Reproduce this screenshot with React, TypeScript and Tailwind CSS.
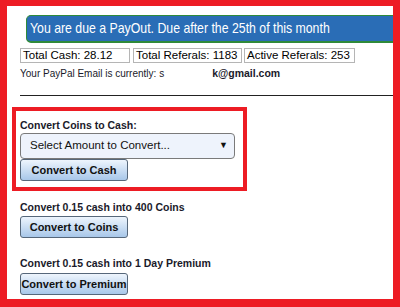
import React from "react";

const btn =
  "block w-[108px] h-[22px] rounded-[3px] border border-[#56677a] bg-gradient-to-b from-[#eef5fd] to-[#a8c7e9] text-[11px] font-bold text-[#111] whitespace-nowrap text-center leading-[20px] px-0";

export default function App() {
  return (
    <div
      className="w-[400px] h-[307px] bg-white border-[#ed1c24] border-l-[7px] border-t-[6px] border-r-[7px] border-b-[8px] overflow-hidden"
      style={{ fontFamily: '"Liberation Sans", Arial, sans-serif' }}
    >
      <div className="pl-[13px] pt-[9px]">
        <div className="ml-[6px] w-[380px] h-[28px] bg-[#2a6db6] border border-b-2 border-[#2f8a3a] rounded-[5px] flex items-center pl-[3px] text-white text-[15px] whitespace-nowrap">
          <span className="inline-block origin-left scale-x-[0.82]">
            You are due a PayOut. Due after the 25th of this month
          </span>
        </div>
        <div className="mt-[5px] flex text-[11.5px] text-black leading-[13px]">
          <div className="w-[110px] h-[15px] border border-[#b5b5b5] pl-[2px] whitespace-nowrap">Total Cash: 28.12</div>
          <div className="ml-[3px] w-[109px] h-[15px] border border-[#b5b5b5] pl-[2px] whitespace-nowrap">Total Referals: 1183</div>
          <div className="ml-[2px] w-[111px] h-[15px] border border-[#b5b5b5] pl-[2px] whitespace-nowrap">Active Referals: 253</div>
        </div>
        <div className="mt-[4px] text-[10px] leading-[13px] text-[#1a1a2a] whitespace-nowrap">
          Your PayPal Email is currently: s
          <span className="inline-block w-[48px]"></span>
          <span className="font-bold text-[10.5px]">k@gmail.com</span>
        </div>
        <div className="mt-[15px] h-px w-[400px] bg-[#222]"></div>
        <div className="mt-[11px] ml-[-8px] w-[235px] border-[4px] border-[#ed1c24] pl-[4px] pr-[4px] pt-[8px] pb-[6px]">
          <div className="text-[10.5px] leading-[13px] font-bold text-[#1a1a2a]">Convert Coins to Cash:</div>
          <div className="mt-[1px] w-[215px] h-[26px] bg-[#eef3fc] border border-[#7a7a7a] rounded-[4px] flex items-center justify-between pl-[9px] pr-[6px] text-[11.5px] text-[#111]">
            <span>Select Amount to Convert...</span>
            <span className="text-[9px]">▼</span>
          </div>
          <button className={btn}>Convert to Cash</button>
        </div>
        <div className="mt-[10px] text-[10.5px] leading-[13px] font-bold text-[#1a1a2a]">Convert 0.15 cash into 400 Coins</div>
        <button className={"mt-[2px] " + btn}>Convert to Coins</button>
        <div className="mt-[19px] text-[10.5px] leading-[13px] font-bold text-[#1a1a2a]">Convert 0.15 cash into 1 Day Premium</div>
        <button className={"mt-[3px] " + btn}>Convert to Premium</button>
      </div>
    </div>
  );
}
